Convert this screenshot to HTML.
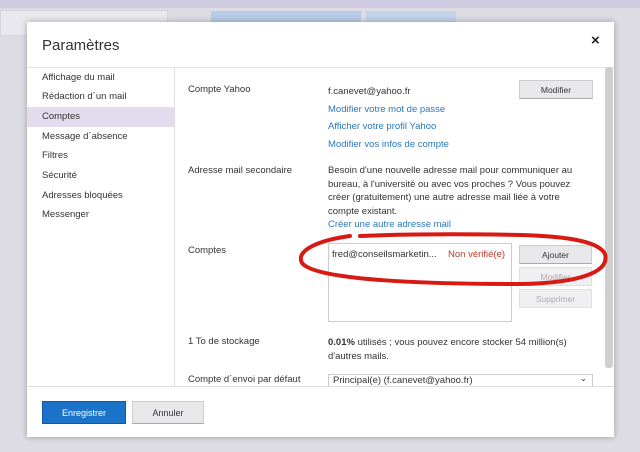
<!DOCTYPE html>
<html><head><meta charset="utf-8"><style>
body{margin:0;width:640px;height:452px;overflow:hidden;background:#dddce4;font-family:"Liberation Sans",sans-serif;position:relative;font-size:9.5px;color:#333}
.a{position:absolute}
.dlg{left:27px;top:22px;width:587px;height:415px;background:#fff;box-shadow:0 0 6px rgba(0,0,0,.3)}
.lnk{color:#2a78b8}
.btn{position:absolute;background:#e8e8ea;border:1px solid #ccc;border-bottom-color:#aaa;text-align:center;font-size:8.5px;color:#333;box-sizing:border-box}
.dis{color:#aaa;background:#f0f0f2;border-color:#e0e0e0}
</style></head><body>
<div class="a" style="left:0;top:0;width:640px;height:8px;background:#cfcbe0"></div>
<div class="a" style="left:0;top:10px;width:166px;height:24px;background:#e9e8ee;border:1px solid #d5d5dc"></div>
<div class="a" style="left:211px;top:11px;width:150px;height:22px;background:#b8cbe8"></div>
<div class="a" style="left:366px;top:11px;width:90px;height:22px;background:#c4d2ea"></div>
<div class="a dlg">
 <div class="a" style="left:15px;top:15px;font-size:15px;color:#333">Paramètres</div>
 <div class="a" style="left:564px;top:10px;font-size:15px;font-weight:bold;color:#222">×</div>
 <div class="a" style="left:0;top:45px;width:587px;height:1px;background:#e2e2e2"></div>
 <div class="a" style="left:147px;top:45px;width:1px;height:319px;background:#ddd"></div>
 <div class="a" style="left:0;top:85px;width:147px;height:20px;background:#e3dcee"></div>
 <div class="a" style="left:15px;top:45.5px;line-height:19.7px">Affichage du mail<br>Rédaction d´un mail<br>Comptes<br>Message d´absence<br>Filtres<br>Sécurité<br>Adresses bloquées<br>Messenger</div>
 <div class="a" style="left:161px;top:62px">Compte Yahoo</div>
 <div class="a" style="left:301px;top:61px;line-height:17.5px">f.canevet@yahoo.fr<br><span class="lnk">Modifier votre mot de passe<br>Afficher votre profil Yahoo<br>Modifier vos infos de compte</span></div>
 <div class="btn" style="left:492px;top:58px;width:74px;height:19px;line-height:18px">Modifier</div>
 <div class="a" style="left:161px;top:143px">Adresse mail secondaire</div>
 <div class="a" style="left:301px;top:142px;width:265px;line-height:13.5px">Besoin d'une nouvelle adresse mail pour communiquer au bureau, à l'université ou avec vos proches ? Vous pouvez créer (gratuitement) une autre adresse mail liée à votre compte existant.</div>
 <div class="a lnk" style="left:301px;top:197px">Créer une autre adresse mail</div>
 <div class="a" style="left:161px;top:223px">Comptes</div>
 <div class="a" style="left:301px;top:221px;width:182px;height:77px;border:1px solid #ccc"></div>
 <div class="a" style="left:305px;top:227px">fred@conseilsmarketin...</div>
 <div class="a" style="left:421px;top:227px;color:#c0392b">Non vérifié(e)</div>
 <div class="btn" style="left:492px;top:223px;width:73px;height:19px;line-height:18px">Ajouter</div>
 <div class="btn dis" style="left:492px;top:245px;width:73px;height:19px;line-height:18px">Modifier</div>
 <div class="btn dis" style="left:492px;top:267px;width:73px;height:19px;line-height:18px">Supprimer</div>
 <div class="a" style="left:161px;top:314px">1 To de stockage</div>
 <div class="a" style="left:301px;top:314px;line-height:13.5px"><b>0.01%</b> utilisés ; vous pouvez encore stocker 54 million(s)<br>d'autres mails.</div>
 <div class="a" style="left:161px;top:352px">Compte d´envoi par défaut</div>
 <div class="a" style="left:301px;top:352px;width:259px;height:12px;border:1px solid #ccc;border-bottom:none;overflow:hidden;padding-left:4px">Principal(e) (f.canevet@yahoo.fr)</div>
 <div class="a" style="left:553px;top:352px;font-size:8px">⌄</div>
 <div class="a" style="left:578px;top:45px;width:8px;height:301px;background:#cfcfcf;border-radius:3px"></div>
 <div class="a" style="left:0;top:364px;width:587px;height:1px;background:#ddd"></div>
 <div class="a" style="left:15px;top:379px;width:84px;height:23px;background:#1a73c8;border:1px solid #0d5aa7;color:#fff;text-align:center;line-height:23px;font-size:9px;box-sizing:border-box">Enregistrer</div>
 <div class="btn" style="left:105px;top:379px;width:72px;height:23px;line-height:22px;font-size:9px">Annuler</div>
</div>
<svg class="a" style="left:0;top:0" width="640" height="452"><path d="M350 236 C 320 240 295 250 302 263 C 315 280 420 284 520 284 C 580 283 610 272 605 254 C 598 240 560 236 520 235 C 470 234 410 234 360 236" fill="none" stroke="#d81a14" stroke-width="4" stroke-linecap="round"/></svg>
</body></html>
